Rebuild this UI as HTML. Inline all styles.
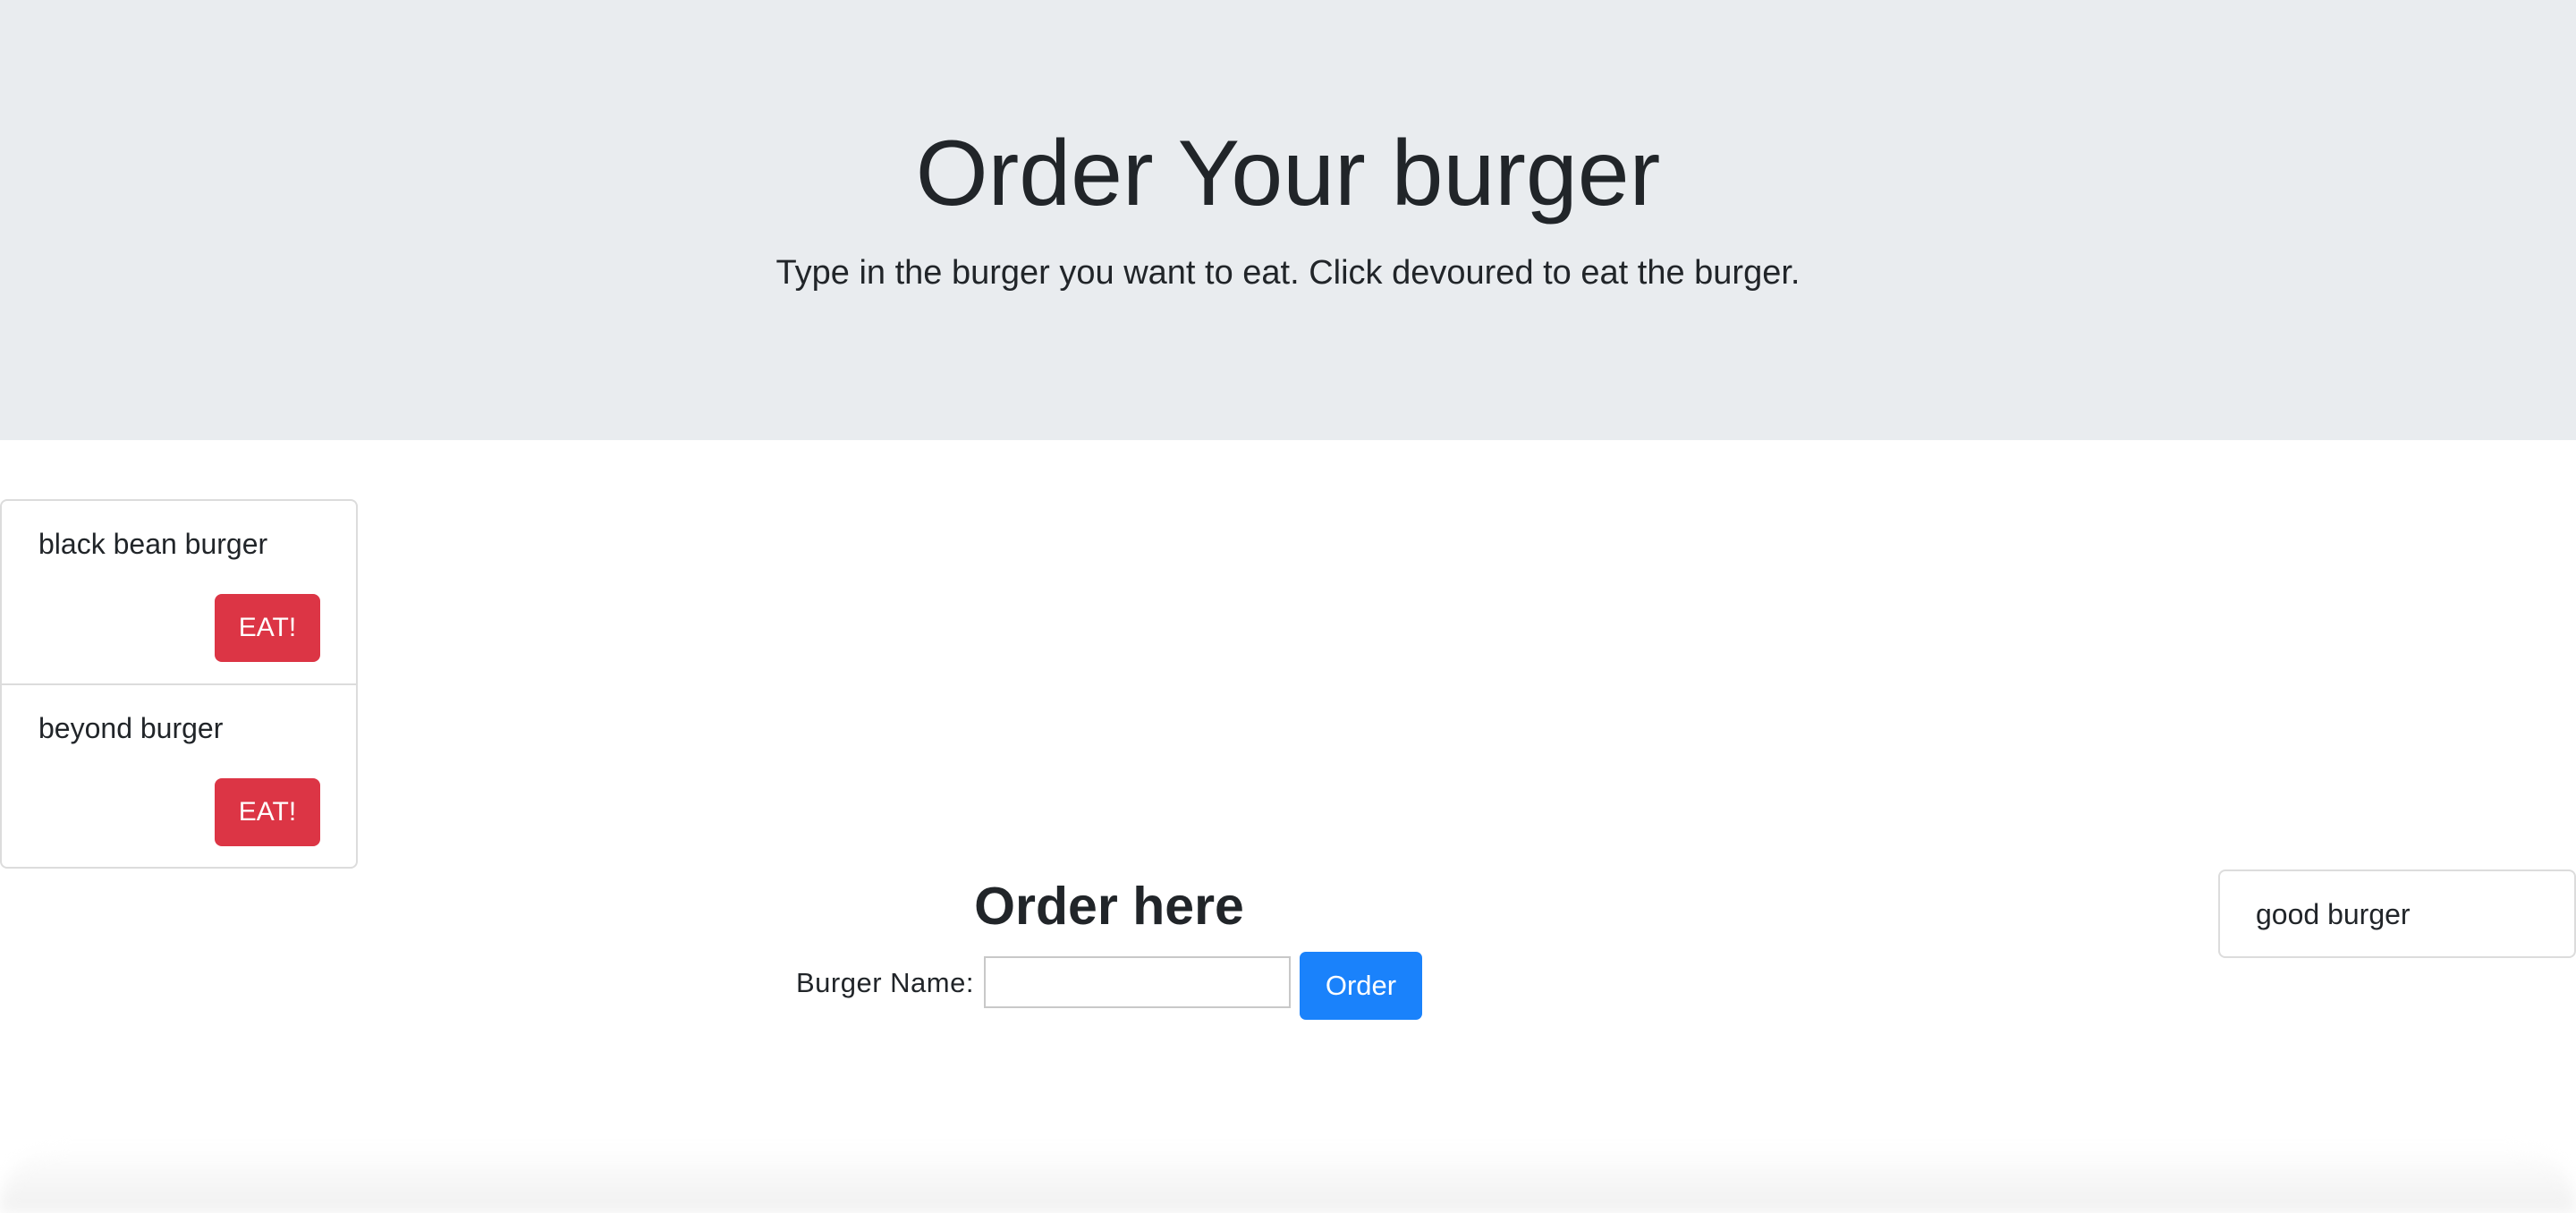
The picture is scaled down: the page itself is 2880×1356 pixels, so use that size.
<!DOCTYPE html>
<html><head><meta charset="utf-8"><style>
html,body{margin:0;padding:0;width:2880px;height:1356px;overflow:hidden;background:#fff;font-family:"Liberation Sans",Arial,sans-serif;color:#212529;position:relative}
.jum{position:absolute;left:0;top:0;width:2880px;height:492px;background:#e9ecef}
.t{position:absolute;left:0;width:2880px;text-align:center;white-space:nowrap}
.card{position:absolute;border:2px solid #dcdcdc;border-radius:8px;box-sizing:border-box;background:#fff}
.txt{position:absolute;font-size:31px;line-height:36px;white-space:nowrap}
.eat{position:absolute;left:240px;width:118px;height:76px;background:#dc3545;border-radius:8px;color:#fff;font-size:30px;line-height:76px;text-align:center}
</style></head><body>
<div class="jum"></div>
<div class="t" style="top:132px;font-size:104px;line-height:124px;font-weight:300;">Order Your burger</div>
<div class="t" style="top:280px;font-size:38px;line-height:50px;font-weight:300;">Type in the burger you want to eat. Click devoured to eat the burger.</div>

<div class="card" style="left:0;top:558px;width:400px;height:413px;">
  <div style="position:absolute;left:0;top:204px;width:396px;height:2px;background:#dcdcdc"></div>
</div>
<div class="txt" style="left:43px;top:590px;font-size:32px">black bean burger</div>
<div class="eat" style="top:664px">EAT!</div>
<div class="txt" style="left:43px;top:796px;font-size:32px">beyond burger</div>
<div class="eat" style="top:870px">EAT!</div>

<div class="card" style="left:2480px;top:972px;width:400px;height:99px;"></div>
<div class="txt" style="left:2522px;top:1004px;font-size:32px">good burger</div>

<div style="position:absolute;left:940px;width:600px;top:978px;text-align:center;font-size:59px;line-height:70px;font-weight:bold;">Order here</div>
<div class="txt" style="left:890px;top:1081px;font-size:31px;letter-spacing:0.5px">Burger Name:</div>
<div style="position:absolute;left:1100px;top:1069px;width:343px;height:58px;border:2px solid #c8c8c8;box-sizing:border-box;background:#fff"></div>
<div style="position:absolute;left:1453px;top:1064px;width:137px;height:76px;background:#1a82fb;border-radius:7px;color:#fff;font-size:31px;line-height:76px;text-align:center">Order</div>

<div style="position:absolute;left:0;top:1280px;width:2880px;height:76px;background:linear-gradient(#fff,#f0f0f0);border-radius:70px 70px 0 0;filter:blur(8px)"></div>
</body></html>
